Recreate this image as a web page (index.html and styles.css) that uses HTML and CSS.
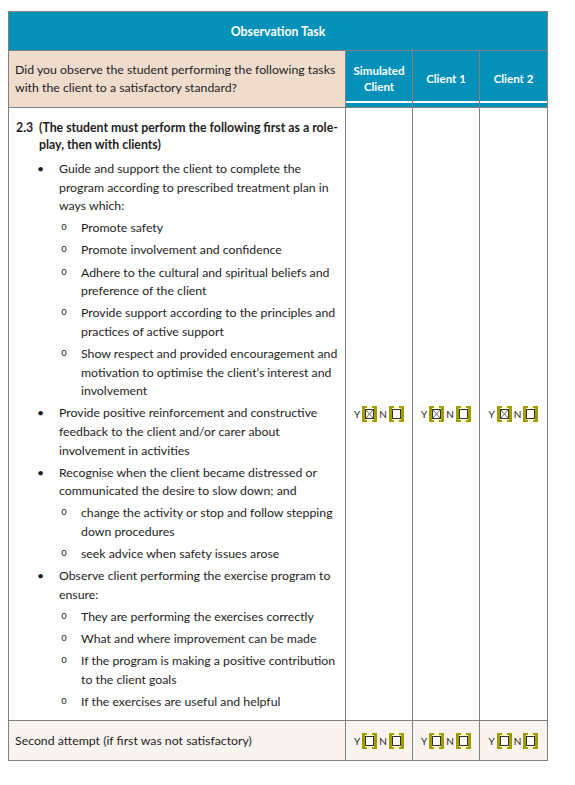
FILE: index.html
```html
<!DOCTYPE html>
<html lang="en">
<head>
<meta charset="utf-8">
<title>Observation Task</title>
<link rel="stylesheet" href="styles.css">
</head>
<body>
<svg class="sprite" xmlns="http://www.w3.org/2000/svg">
  <symbol id="box-empty" viewBox="0 0 15 16">
    <rect width="15" height="16" fill="#ffffd4"/>
    <path d="M0 0H5V2H3V14H5V16H0Z M15 0H10V2H12V14H10V16H15Z" fill="#a29c00"/>
    <rect x="3.5" y="3.5" width="8" height="9" fill="#fff" stroke="#333"/>
  </symbol>
  <symbol id="box-checked" viewBox="0 0 15 16">
    <rect width="15" height="16" fill="#ffffd4"/>
    <path d="M0 0H5V2H3V14H5V16H0Z M15 0H10V2H12V14H10V16H15Z" fill="#a29c00"/>
    <rect x="3.5" y="3.5" width="8" height="9" fill="#fff" stroke="#333"/>
    <path d="M4 4L11 12M11 4L4 12" stroke="#555" stroke-width="0.9"/>
  </symbol>
</svg>

<div class="sheet">
  <div class="cell title">Observation Task</div>

  <div class="cell question">Did you observe the student performing the following tasks<br>with the client to a satisfactory standard?</div>
  <div class="cell colhead">Simulated<br>Client</div>
  <div class="cell colhead">Client 1</div>
  <div class="cell colhead">Client 2</div>

  <div class="cell tasks">
    <div class="heading"><span class="num">2.3</span><span>(The student must perform the following first as a role-<br>play, then with clients)</span></div>
    <div class="item l1"><span class="mark">&#8226;</span><span>Guide and support the client to complete the<br>program according to prescribed treatment plan in<br>ways which:</span></div>
    <div class="item l2"><span class="mark">o</span><span>Promote safety</span></div>
    <div class="item l2"><span class="mark">o</span><span>Promote involvement and confidence</span></div>
    <div class="item l2"><span class="mark">o</span><span>Adhere to the cultural and spiritual beliefs and<br>preference of the client</span></div>
    <div class="item l2"><span class="mark">o</span><span>Provide support according to the principles and<br>practices of active support</span></div>
    <div class="item l2"><span class="mark">o</span><span>Show respect and provided encouragement and<br>motivation to optimise the client’s interest and<br>involvement</span></div>
    <div class="item l1"><span class="mark">&#8226;</span><span>Provide positive reinforcement and constructive<br>feedback to the client and/or carer about<br>involvement in activities</span></div>
    <div class="item l1"><span class="mark">&#8226;</span><span>Recognise when the client became distressed or<br>communicated the desire to slow down; and</span></div>
    <div class="item l2"><span class="mark">o</span><span>change the activity or stop and follow stepping<br>down procedures</span></div>
    <div class="item l2"><span class="mark">o</span><span>seek advice when safety issues arose</span></div>
    <div class="item l1"><span class="mark">&#8226;</span><span>Observe client performing the exercise program to<br>ensure:</span></div>
    <div class="item l2"><span class="mark">o</span><span>They are performing the exercises correctly</span></div>
    <div class="item l2"><span class="mark">o</span><span>What and where improvement can be made</span></div>
    <div class="item l2"><span class="mark">o</span><span>If the program is making a positive contribution<br>to the client goals</span></div>
    <div class="item l2"><span class="mark">o</span><span>If the exercises are useful and helpful</span></div>
  </div>
  <div class="cell check"><span class="yn">Y</span><svg class="box"><use href="#box-checked"/></svg><span class="yn n">N</span><svg class="box"><use href="#box-empty"/></svg></div>
  <div class="cell check"><span class="yn">Y</span><svg class="box"><use href="#box-checked"/></svg><span class="yn n">N</span><svg class="box"><use href="#box-empty"/></svg></div>
  <div class="cell check"><span class="yn">Y</span><svg class="box"><use href="#box-checked"/></svg><span class="yn n">N</span><svg class="box"><use href="#box-empty"/></svg></div>

  <div class="cell attempt last">Second attempt (if first was not satisfactory)</div>
  <div class="cell check last"><span class="yn">Y</span><svg class="box"><use href="#box-empty"/></svg><span class="yn n">N</span><svg class="box"><use href="#box-empty"/></svg></div>
  <div class="cell check last"><span class="yn">Y</span><svg class="box"><use href="#box-empty"/></svg><span class="yn n">N</span><svg class="box"><use href="#box-empty"/></svg></div>
  <div class="cell check last"><span class="yn">Y</span><svg class="box"><use href="#box-empty"/></svg><span class="yn n">N</span><svg class="box"><use href="#box-empty"/></svg></div>
</div>
</body>
</html>
```

FILE: styles.css
```css
* { box-sizing: border-box; }

body {
  margin: 0;
  padding: 11px 0 0 8px;
  background: #fff;
  font-family: Lato, "Liberation Sans", sans-serif;
  font-size: 12.3px;
  color: #1e1e1e;
}

.sprite {
  display: block;
  width: 0;
  height: 0;
  overflow: hidden;
}

.sheet {
  display: grid;
  grid-template-columns: 337px 67px 67px 68px;
  grid-template-rows: 39px 57px 613px 40px;
  width: 540px;
  border-top: 1px solid #808080;
  border-left: 1px solid #808080;
}

.cell {
  border-right: 1px solid #808080;
  border-bottom: 1px solid #808080;
}

.title {
  grid-column: 1 / -1;
  background: #0491b9;
  color: #fff;
  font-weight: 700;
  display: flex;
  align-items: center;
  justify-content: center;
}

.question {
  background: #efdccd;
  padding: 10px 0 0 6px;
  line-height: 18px;
  white-space: nowrap;
}

.colhead {
  background: linear-gradient(to top, #0491b9 0 4px, #fff 4px 6px, #0491b9 6px);
  color: #fff;
  font-size: 11.5px;
  font-weight: 700;
  line-height: 16px;
  text-align: center;
  display: flex;
  align-items: center;
  justify-content: center;
}

.tasks {
  padding: 11px 0 0 7px;
  white-space: nowrap;
}

.heading {
  display: flex;
  font-weight: 700;
  line-height: 17px;
}

.heading .num {
  width: 23px;
  flex: none;
}

.item {
  display: flex;
  line-height: 18.6px;
  margin-top: 3.55px;
}

.heading + .item {
  margin-top: 7px;
}

.item .mark {
  flex: none;
}

.l1 { padding-left: 21px; }
.l1 .mark { width: 22px; }

.l2 { padding-left: 45px; }
.l2 .mark {
  width: 20px;
  font-family: "Liberation Mono", monospace;
  font-size: 10px;
}

.check {
  display: flex;
  align-items: center;
  justify-content: center;
}

.yn {
  font-size: 10px;
  margin-right: 2px;
}

.yn.n {
  margin-left: 2px;
}

.box {
  width: 15px;
  height: 16px;
  flex: none;
}

.attempt {
  display: flex;
  align-items: center;
  padding-left: 6px;
}

.last {
  background: #f9f4f0;
}
```
